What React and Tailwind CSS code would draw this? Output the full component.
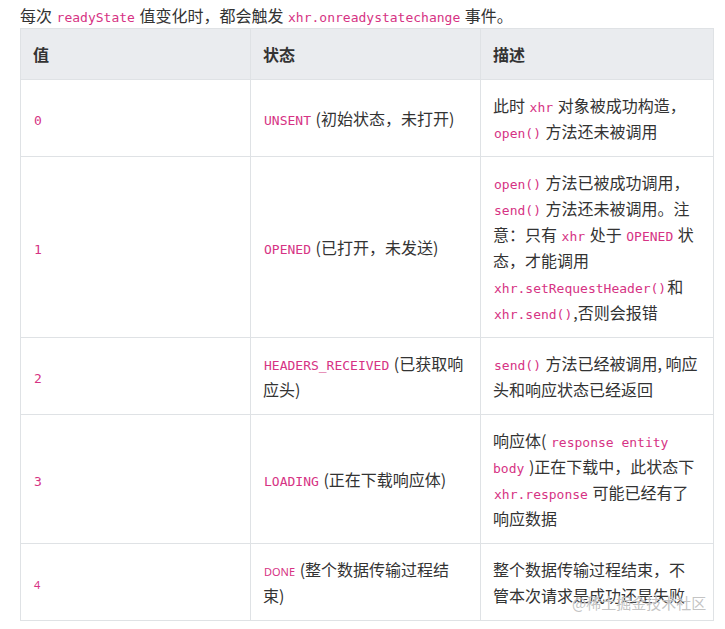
import React from "react";

const C = ({ children }) => (
  <code className="font-[family-name:'DejaVu_Sans_Mono',monospace] text-[13px] leading-none text-[#d63384] px-[1px]">
    {children}
  </code>
);

const S = ({ children }) => (
  <span className="font-[family-name:'Noto_Sans','Noto_Sans_CJK_SC',sans-serif] text-[11px] leading-none text-[#d63384] px-[1px]">
    {children}
  </span>
);

const td = "border border-[#dfe2e5] pl-3 py-3 align-middle";

const rows = [
  {
    v: <C>0</C>,
    s: (
      <>
        <C>UNSENT</C> (初始状态，未打开)
      </>
    ),
    d: (
      <>
        此时 <C>xhr</C> 对象被成功构造，<C>open()</C> 方法还未被调用
      </>
    ),
  },
  {
    v: <C>1</C>,
    s: (
      <>
        <C>OPENED</C> (已打开，未发送)
      </>
    ),
    d: (
      <>
        <C>open()</C> 方法已被成功调用，<C>send()</C> 方法还未被调用。注意：只有 <C>xhr</C> 处于 <C>OPENED</C> 状态，才能调用{" "}
        <C>xhr.setRequestHeader()</C>和 <C>xhr.send()</C>,否则会报错
      </>
    ),
  },
  {
    v: <C>2</C>,
    s: (
      <>
        <C>HEADERS_RECEIVED</C> (已获取响应头)
      </>
    ),
    d: (
      <>
        <C>send()</C> 方法已经被调用, 响应头和响应状态已经返回
      </>
    ),
  },
  {
    v: <C>3</C>,
    s: (
      <>
        <C>LOADING</C> (正在下载响应体)
      </>
    ),
    d: (
      <>
        响应体( <C>response entity body</C> )正在下载中，此状态下 <C>xhr.response</C> 可能已经有了响应数据
      </>
    ),
  },
  {
    v: <S>4</S>,
    s: (
      <>
        <S>DONE</S> (整个数据传输过程结束)
      </>
    ),
    d: <>整个数据传输过程结束，不管本次请求是成功还是失败</>,
  },
];

export default function App() {
  return (
    <div className="relative w-[725px] h-[629px] overflow-hidden bg-white text-[#333] text-[16px] leading-[26px] font-[family-name:'Noto_Sans_CJK_SC',sans-serif]">
      <div className="pl-5 pt-[2px]">
        <p>
          每次 <C>readyState</C> 值变化时，都会触发 <C>xhr.onreadystatechange</C> 事件。
        </p>
        <table className="table-fixed border-collapse w-[693px]">
          <colgroup>
            <col className="w-[230px]" />
            <col className="w-[230px]" />
            <col className="w-[233px]" />
          </colgroup>
          <thead>
            <tr className="bg-[#eaecef]">
              <th className={`${td} pr-3 text-left font-bold`}>值</th>
              <th className={`${td} pr-3 text-left font-bold`}>状态</th>
              <th className={`${td} pr-[13px] text-left font-bold`}>描述</th>
            </tr>
          </thead>
          <tbody>
            {rows.map((r, i) => (
              <tr key={i}>
                <td className={`${td} pr-3`}>{r.v}</td>
                <td className={`${td} pr-3`}>{r.s}</td>
                <td className={`${td} pr-[13px]`}>{r.d}</td>
              </tr>
            ))}
          </tbody>
        </table>
      </div>
      <div className="absolute left-[572px] top-[590px] text-[15px] leading-[26px] text-[#b4b4b4]/80 [text-shadow:0_0_1px_#fff] pointer-events-none">
        @稀土掘金技术社区
      </div>
    </div>
  );
}
